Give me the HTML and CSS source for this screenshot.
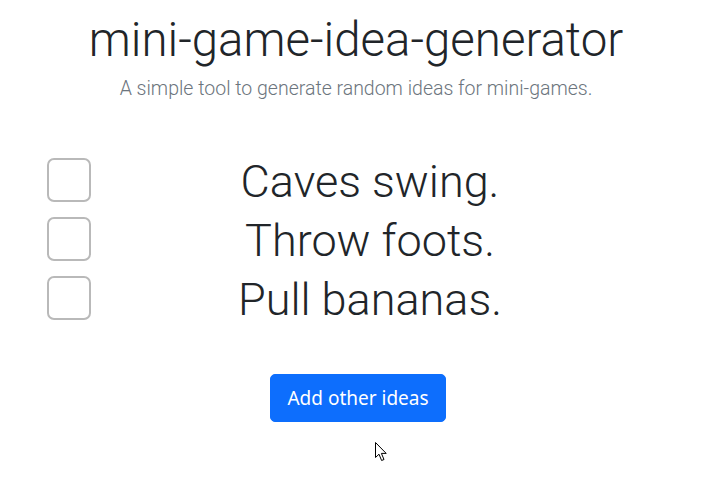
FILE: index.html
```html
<!DOCTYPE html>
<html lang="en">
<head>
<meta charset="utf-8">
<title>mini-game-idea-generator</title>
<link rel="stylesheet" href="styles.css">
</head>
<body>
<header class="header">
  <h1 class="title">mini-game-idea-generator</h1>
  <p class="lead">A simple tool to generate random ideas for mini-games.</p>
</header>
<main class="ideas">
  <div class="idea"><span class="check"></span><span class="idea-text">Caves swing.</span></div>
  <div class="idea"><span class="check"></span><span class="idea-text">Throw foots.</span></div>
  <div class="idea"><span class="check"></span><span class="idea-text">Pull bananas.</span></div>
</main>
<div class="actions">
  <button class="btn" type="button">Add other ideas</button>
</div>
<svg class="cursor" width="14" height="20" viewBox="0 0 14 20" aria-hidden="true">
  <path d="M0.5 0.5 L0.5 15.5 L4 12.2 L6.6 18.5 L9 17.5 L6.4 11.4 L11.2 11.4 Z" fill="#fff" stroke="#000" stroke-width="1" stroke-linejoin="miter"/>
</svg>
</body>
</html>
```
FILE: styles.css
```css
html, body {
  margin: 0;
  padding: 0;
  background: #fff;
}
body {
  font-family: Roboto, "Liberation Sans", sans-serif;
  color: #212529;
  position: relative;
  width: 712px;
  height: 500px;
  overflow: hidden;
}
.header {
  text-align: center;
  padding-top: 10px;
}
.title {
  margin: 0;
  font-weight: 300;
  font-size: 47.4px;
  line-height: 60px;
  color: #212529;
}
.lead {
  margin: 6px 0 0;
  font-weight: 300;
  font-size: 19.5px;
  line-height: 26px;
  color: #6c757d;
}
.ideas {
  margin-top: 46px;
  padding: 0 63px 0 47px;
  display: flex;
  flex-direction: column;
}
.idea {
  display: grid;
  grid-template-columns: 44px 1fr;
  align-items: center;
  height: 59px;
}
.check {
  width: 40px;
  height: 40px;
  border: 2px solid #b9b9b9;
  border-radius: 7px;
  box-sizing: content-box;
}
.idea-text {
  text-align: center;
  font-weight: 300;
  font-size: 45px;
  line-height: 59px;
  padding-top: 4px;
}
.actions {
  display: flex;
  justify-content: center;
  margin-top: 49px;
}
.btn {
  font-family: "Noto Sans", "Open Sans", sans-serif;
  font-size: 19px;
  line-height: 30px;
  padding: 8px 16px;
  border: 1px solid #0d6efd;
  background: #0d6efd;
  color: #fff;
  border-radius: 5px;
  margin-left: 4px;
}
.cursor {
  position: absolute;
  left: 375px;
  top: 442px;
}
```
